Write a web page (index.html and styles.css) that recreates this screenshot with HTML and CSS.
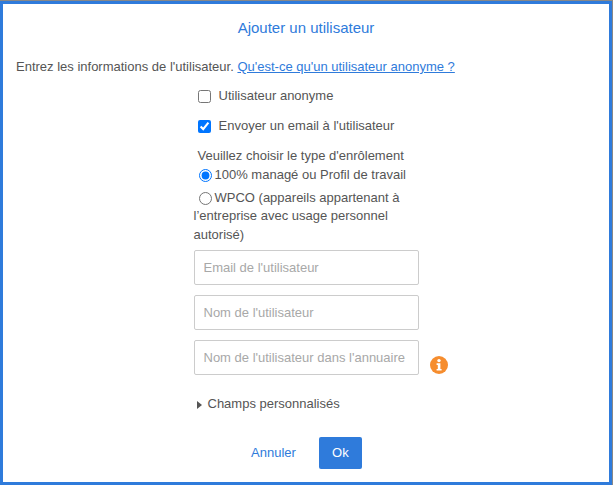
FILE: index.html
```html
<!DOCTYPE html>
<html>
<head>
  <title>Ajouter un utilisateur</title>
  <link rel="stylesheet" href="styles.css">
</head>
<body>
  <div class="dialog">
    <h1 class="dialog-title">Ajouter un utilisateur</h1>
    <p class="intro">Entrez les informations de l'utilisateur. <a href="#">Qu'est-ce qu'un utilisateur anonyme ?</a></p>

    <div class="form">
      <label class="check-row"><input type="checkbox"> Utilisateur anonyme</label>
      <label class="check-row"><input type="checkbox" checked> Envoyer un email à l'utilisateur</label>

      <div class="enroll">
        <div class="enroll-title">Veuillez choisir le type d'enrôlement</div>
        <label class="radio-row"><input type="radio" name="enroll" checked>100% managé ou Profil de travail</label>
        <label class="radio-row"><input type="radio" name="enroll">WPCO (appareils appartenant à l’entreprise avec usage personnel autorisé)</label>
      </div>

      <input class="field" type="text" placeholder="Email de l'utilisateur">
      <input class="field" type="text" placeholder="Nom de l'utilisateur">
      <div class="field-wrap">
        <input class="field" type="text" placeholder="Nom de l'utilisateur dans l'annuaire">
        <svg class="info" width="18" height="18" viewBox="0 0 18 18">
          <circle cx="9" cy="9" r="9" fill="#f68d2e"/>
          <circle cx="9" cy="4.6" r="1.7" fill="#fff"/>
          <path d="M6.6 7.3h3.8v5.6h1.2v1.7H6.6v-1.7h1.2V9H6.6z" fill="#fff"/>
        </svg>
      </div>

      <div class="custom-fields"><span class="caret"></span>Champs personnalisés</div>
    </div>

    <div class="actions">
      <a class="cancel" href="#">Annuler</a>
      <button class="ok">Ok</button>
    </div>
  </div>
</body>
</html>
```

FILE: styles.css
```css
html, body {
  height: 100%;
}
body {
  margin: 0;
  font-family: "Liberation Sans", Arial, sans-serif;
  font-size: 13px;
  line-height: 18.57px;
  color: #555;
  background: #888;
  padding: 1px 1px 0 0;
  box-sizing: border-box;
}
.dialog {
  height: 100%;
  box-sizing: border-box;
  background: white;
  border: 3px solid #2f7bdb;
  display: flex;
  flex-direction: column;
  align-items: center;
}
.dialog-title {
  margin: 15px 0 0;
  font-size: 15px;
  font-weight: normal;
  line-height: 18px;
  color: #2f7bdb;
}
.intro {
  align-self: flex-start;
  margin: 21px 0 0 13px;
}
.intro a {
  color: #2f7bdb;
}
.form {
  width: 225px;
  margin-top: 11px;
  display: flex;
  flex-direction: column;
}
.check-row {
  display: flex;
  align-items: center;
  gap: 8px;
  height: 18px;
  margin-bottom: 12px;
  padding-left: 4px;
}
.check-row input {
  margin: 0;
  width: 13px;
  height: 13px;
}
.enroll {
  margin-top: -1px;
  margin-bottom: 2px;
}
.enroll-title {
  padding-left: 4px;
  margin-bottom: 1px;
}
.radio-row {
  display: block;
  margin-bottom: 4px;
}
.radio-row input {
  margin: 0 3px 0 5px;
  width: 13px;
  height: 13px;
  vertical-align: -3px;
}
.field {
  width: 225px;
  height: 35px;
  box-sizing: border-box;
  padding: 0 9px;
  border: 1px solid #ccc;
  border-radius: 2px;
  font-family: inherit;
  font-size: 13px;
  margin-bottom: 10px;
  display: block;
}
.field::placeholder {
  color: #a8a8a8;
}
.field-wrap {
  position: relative;
}
.info {
  position: absolute;
  left: 236px;
  top: 16px;
}
.custom-fields {
  display: flex;
  align-items: center;
  margin-top: 10px;
  padding-left: 3px;
}
.caret {
  width: 0;
  height: 0;
  border-left: 5px solid #555;
  border-top: 4px solid transparent;
  border-bottom: 4px solid transparent;
  margin-right: 6px;
}
.actions {
  margin-top: 23px;
  padding-left: 1px;
  display: flex;
  align-items: center;
  gap: 23px;
}
.cancel {
  color: #2f7bdb;
  text-decoration: none;
}
.ok {
  width: 43px;
  height: 32px;
  background: #2f7bdb;
  color: white;
  border: 0;
  border-radius: 2px;
  font-family: inherit;
  font-size: 13px;
}
```
